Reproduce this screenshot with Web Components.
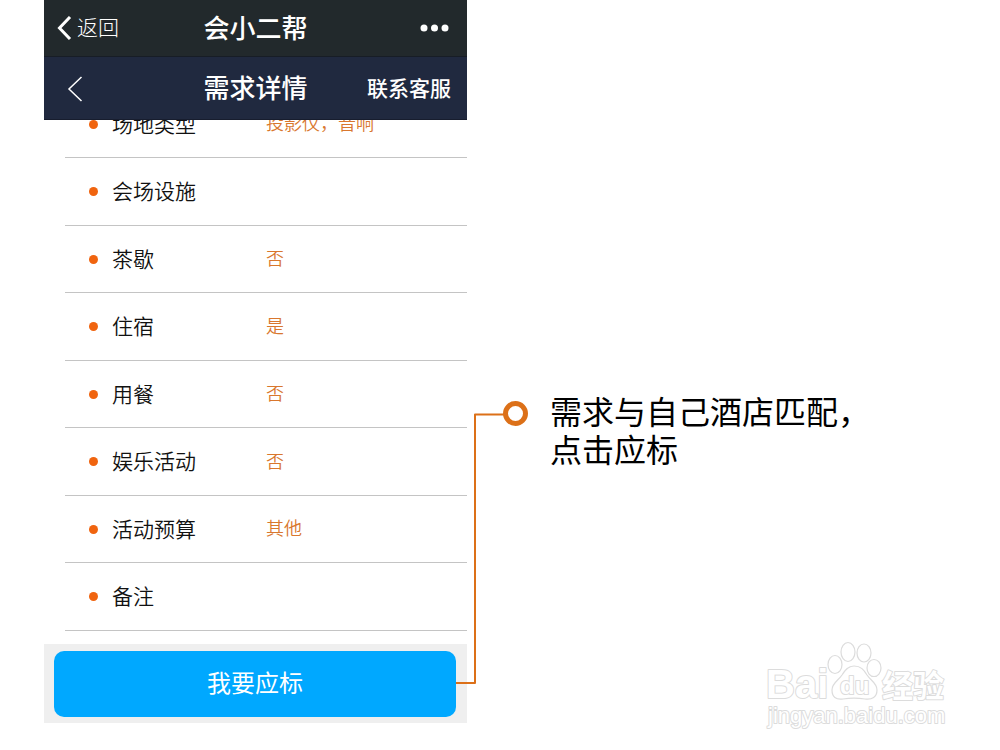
<!DOCTYPE html>
<html lang="zh-CN">
<head>
<meta charset="utf-8">
<meta name="viewport" content="width=device-width, initial-scale=1">
<title>需求详情</title>
<style>
  body {
    margin: 0;
    background: #fff;
    color: #111;
    font-family: "Liberation Sans", "Noto Sans CJK SC", sans-serif;
  }
</style>
</head>
<body>
<guide-page>
  <phone-screen slot="screen">
    <wechat-bar slot="top" heading="会小二帮"></wechat-bar>
    <page-bar slot="top" heading="需求详情"></page-bar>
    <detail-row label="场地类型">投影仪，音响</detail-row>
    <detail-row label="会场设施"></detail-row>
    <detail-row label="茶歇">否</detail-row>
    <detail-row label="住宿">是</detail-row>
    <detail-row label="用餐">否</detail-row>
    <detail-row label="娱乐活动">否</detail-row>
    <detail-row label="活动预算">其他</detail-row>
    <detail-row label="备注"></detail-row>
    <bid-action slot="bottom">我要应标</bid-action>
  </phone-screen>
  <step-note slot="note">需求与自己酒店匹配，<br>点击应标</step-note>
  <site-mark slot="mark"></site-mark>
</guide-page>

<script>
const define = (name, html, setup) => {
  const template = document.createElement('template');
  template.innerHTML = html;
  customElements.define(name, class extends HTMLElement {
    constructor() {
      super();
      this.attachShadow({ mode: 'open' }).append(template.content.cloneNode(true));
    }
    connectedCallback() {
      if (setup) setup(this, this.shadowRoot);
    }
  });
};

define('guide-page', `
  <style>
    :host { display: block; position: relative; min-height: 100vh; overflow: hidden; }
    main { display: grid; grid-template-columns: 423fr 533fr; padding-left: 44px; }
  </style>
  <main><slot name="screen"></slot><slot name="note"></slot></main>
  <slot name="mark"></slot>
`);

define('phone-screen', `
  <style>
    :host { display: block; }
    header { position: relative; z-index: 1; }
    /* The list is scrolled a little way under the header. */
    .list { margin: -29px 0 13px; padding-left: 21px; }
  </style>
  <header><slot name="top"></slot></header>
  <div class="list"><slot></slot></div>
  <slot name="bottom"></slot>
`);

define('wechat-bar', `
  <style>
    :host { display: block; background: #22292c; color: #fff; border-bottom: 1px solid #171d26; }
    div { display: grid; grid-template-columns: 1fr auto 1fr; align-items: center; height: 56px; padding: 0 18px; box-sizing: border-box; }
    h1 { margin: 0; padding-top: 2px; font-size: 26px; font-weight: 500; line-height: 40px; }
    button { border: 0; padding: 0; background: none; color: inherit; font: inherit; display: flex; align-items: center; }
    .back { gap: 5px; margin-left: -5px; font-size: 21px; line-height: 32px; font-weight: 300; }
    .more { justify-self: end; }
  </style>
  <div>
    <button class="back" type="button">
      <svg width="15" height="24" viewBox="0 0 15 24" aria-hidden="true"><path d="M13 1 2.5 12 13 23" fill="none" stroke="#fff" stroke-width="3"/></svg>返回</button>
    <h1></h1>
    <button class="more" type="button" aria-label="更多">
      <svg width="29" height="8" viewBox="0 0 29 8" aria-hidden="true" fill="#fff"><circle cx="4" cy="4" r="3.5"/><circle cx="14.5" cy="4" r="3.5"/><circle cx="25" cy="4" r="3.5"/></svg></button>
  </div>
`, (el, root) => { root.querySelector('h1').textContent = el.getAttribute('heading'); });

define('page-bar', `
  <style>
    :host { display: block; background: #20293f; color: #fff; border-bottom: 1px solid #171d2e; }
    div { display: grid; grid-template-columns: 1fr auto 1fr; align-items: center; height: 62px; padding: 2px 16px 0; box-sizing: border-box; }
    h2 { margin: 0; font-size: 26px; font-weight: 500; line-height: 40px; }
    button { border: 0; padding: 0; margin-left: 7px; background: none; font: inherit; display: flex; }
    a { justify-self: end; color: inherit; text-decoration: none; font-size: 21px; font-weight: 500; line-height: 32px; }
  </style>
  <div>
    <button type="button" aria-label="后退">
      <svg width="16" height="26" viewBox="0 0 16 26" aria-hidden="true"><path d="M14.5 1 2 13 14.5 25" fill="none" stroke="#fff" stroke-width="1.5"/></svg></button>
    <h2></h2>
    <a href="#service">联系客服</a>
  </div>
`, (el, root) => { root.querySelector('h2').textContent = el.getAttribute('heading'); });

define('detail-row', `
  <style>
    :host { display: grid; grid-template-columns: 9px 154px 1fr; align-items: center;
      box-sizing: border-box; height: 67px; padding-left: 24px; border-bottom: 1px solid #c4c4c4; }
    :host(:nth-of-type(even)) { height: 68px; }
    i { width: 9px; height: 9px; border-radius: 50%; background: #f0640f; }
    .label { padding: 1px 0 0 14px; font-size: 21px; line-height: 32px; font-weight: 350; }
    .value { padding-left: 14px; font-size: 18px; line-height: 28px; font-weight: 350; color: #d9772e; }
  </style>
  <i></i><span class="label"></span><span class="value"><slot></slot></span>
`, (el, root) => { root.querySelector('.label').textContent = el.getAttribute('label'); });

define('bid-action', `
  <style>
    :host { display: block; background: #efefef; padding: 7px 11px 6px 10px; }
    button { display: block; width: 100%; border: 0; border-radius: 10px; padding: 15px; background: #00a8ff;
      color: #fff; font: inherit; font-size: 24px; line-height: 36px; }
  </style>
  <button type="button"><slot></slot></button>
`);

define('step-note', `
  <style>
    :host { display: block; position: relative; padding: 394px 0 0 83px; color: #000; }
    p { margin: 0; font-size: 32px; line-height: 38px; }
    svg { position: absolute; left: -11px; top: 400px; }
  </style>
  <svg width="73" height="286" viewBox="0 0 73 286" aria-hidden="true" fill="none" stroke="#dc7018">
    <path d="M0 283H19V14.5H48" stroke-width="2" stroke-linejoin="round"/>
    <circle cx="59.5" cy="13.5" r="10" stroke-width="5"/>
  </svg>
  <p><slot></slot></p>
`);

define('site-mark', `
  <style>
    :host { display: block; position: absolute; right: 50px; bottom: 16px; }
    svg { display: block; }
    text { font-family: "Liberation Sans", "Noto Sans CJK SC", sans-serif; font-weight: 700; paint-order: stroke; stroke-width: 2px; }
    .site { font-weight: 400; }
  </style>
  <svg width="186" height="96" viewBox="0 0 186 96" fill="#fff" stroke="#dcdcdc" stroke-width="1.2" stroke-linejoin="round">
    <text x="2" y="60" font-size="40">Bai</text>
    <ellipse cx="71" cy="26.5" rx="7" ry="9"/>
    <ellipse cx="84" cy="14" rx="7" ry="9.5"/>
    <ellipse cx="100" cy="15" rx="7" ry="9"/>
    <ellipse cx="110" cy="30" rx="7" ry="8.5"/>
    <path d="M90 28C97 28 100 32 103 37C107 43 113 45 113 52C113 59 108 62 101 61C94 60 86 60 79 61C72 62 68 59 68 52C68 45 74 43 78 37C81 32 84 28 90 28Z"/>
    <text x="76" y="56" font-size="24">du</text>
    <text x="118" y="59" font-size="31">经验</text>
    <text class="site" x="4" y="85" font-size="22">jingyan.baidu.com</text>
  </svg>
`);
</script>
</body>
</html>
